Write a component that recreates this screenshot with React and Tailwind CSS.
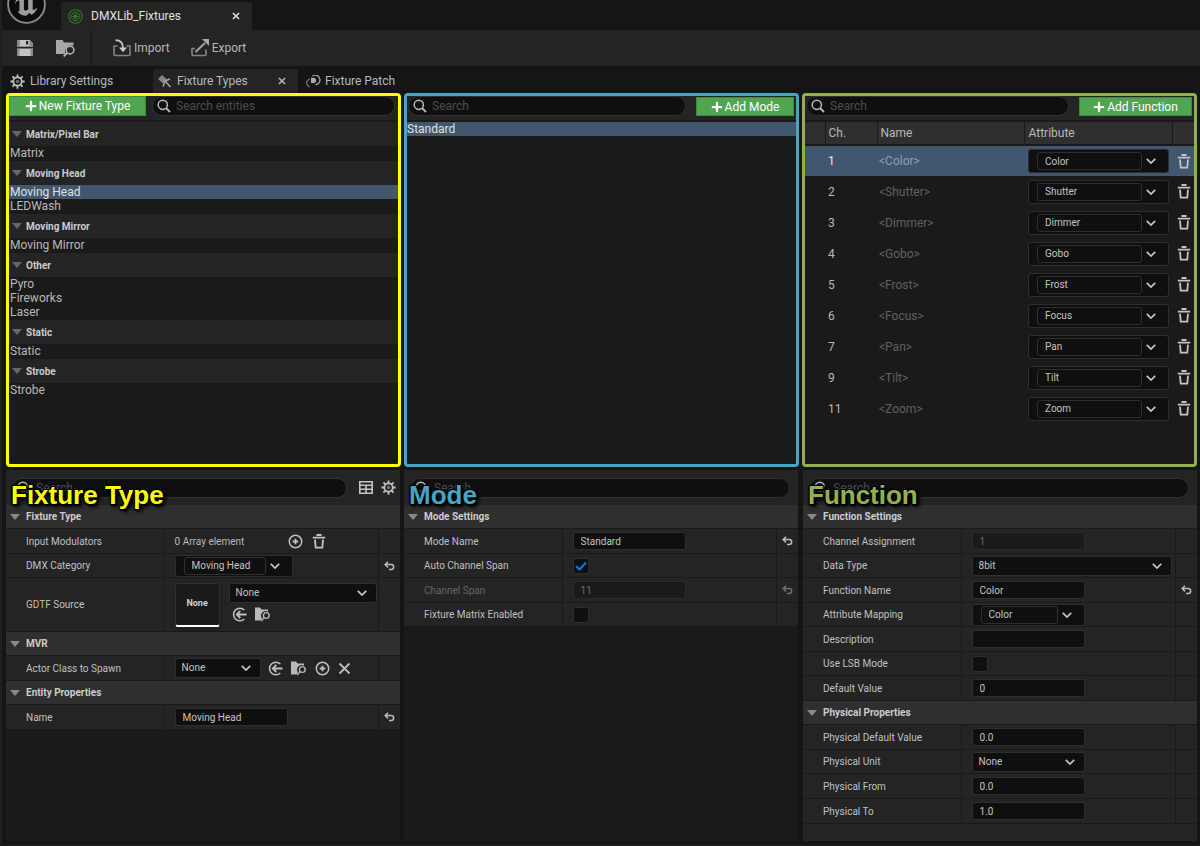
import React, { useState } from 'react';
import { SiUnrealengine } from 'react-icons/si';
import { FaPlus } from 'react-icons/fa';

/* ---------- icons ---------- */

const SearchIcon = () => (
  <svg viewBox="0 0 14 14" className="size-[14px] shrink-0" fill="none" stroke="#b8b8b8" strokeWidth="1.5">
    <circle cx="5.8" cy="5.8" r="4.6" />
    <path d="M9 9l4 4" strokeWidth="1.8" />
  </svg>
);

const ChevronIcon = () => (
  <svg viewBox="0 0 10 6" className="w-[10px] h-[6px]" fill="none" stroke="#c8c8c8" strokeWidth="1.7">
    <path d="M.8 .8L5 5 9.200 .8" />
  </svg>
);

const TrashIcon = () => (
  <svg viewBox="0 0 14 15" className="w-[14px] h-[15px]" fill="none" stroke="#c4c4c4" strokeWidth="1.8">
    <path d="M4.500 1h5M.8 3.600h12.400M3 5.600l.7 8.100h6.600l.7-8.100" />
  </svg>
);

const ResetIcon = () => (
  <svg viewBox="0 0 11 10" className="w-[11px] h-[10px]" fill="none" stroke="#bcbcbc" strokeWidth="1.500">
    <path d="M4 .8L1.200 3.600 4 6.400M1.400 3.600h5.800a2.400 2.400 0 0 1 0 4.900H5" />
  </svg>
);

const GearIcon = () => (
  <svg viewBox="0 0 16 16" className="size-[15px]" fill="none" stroke="#bdbdbd">
    <circle cx="8" cy="8" r="4.500" strokeWidth="1.900" />
    <circle cx="8" cy="8" r="1.900" fill="#bdbdbd" stroke="none" opacity=".5" />
    <path
      d="M8 .4v3.400M8 12.200v3.400M.4 8h3.400M12.200 8h3.400M2.600 2.600L5 5M11 11l2.400 2.400M2.600 13.400L5 11M11 5l2.400-2.400"
      strokeWidth="2"
    />
  </svg>
);

const SaveIcon = () => (
  <svg viewBox="0 0 16 16" className="size-4">
    <path d="M0 0h13l3 3v13H0z" fill="#8a8a8a" />
    <path d="M3 0h9.500v6H3zM2.500 9h11v7h-11z" fill="#c4c4c4" />
    <path d="M9 1h2.200v3.600H9zM0 7h16v1.200H0z" fill="#242424" />
  </svg>
);

const BrowseIcon = ({ className }) => (
  <svg viewBox="0 0 20 17" className={className} fill="none">
    <path d="M0 0h6.500l1.500 2.500h9.500v3.200a6 6 0 0 0-7.800 8.300H0z" fill="#a8a8a8" />
    <circle cx="14" cy="10" r="3.900" stroke="#b4b4b4" strokeWidth="1.600" />
    <path d="M11.300 12.800l-3.600 3.600" stroke="#b4b4b4" strokeWidth="1.900" />
  </svg>
);

const AssetBrowseIcon = () => (
  <svg viewBox="0 0 16 15" className="w-4 h-[15px]" fill="none">
    <path d="M0 .5h5l1.500 2h6.500v2.300a4.500 4.500 0 0 0-6 6.500l-1.500 2.200H0z" fill="#b8b8b8" />
    <circle cx="11.300" cy="8.500" r="2.900" stroke="#b8b8b8" strokeWidth="1.400" />
    <path d="M9.200 10.600l-3 3.400" stroke="#b8b8b8" strokeWidth="1.400" />
  </svg>
);

const ImportIcon = () => (
  <svg viewBox="0 0 18 18" className="size-[18px]" fill="none" stroke="#858585" strokeWidth="1.600">
    <path d="M4.500 7H1v8.500q0 1 1 1h14q1 0 1-1V7h-3.500" />
    <path d="M2.500 1.200c4.500 0 7.500 2.500 7.500 8" stroke="#c8c8c8" strokeWidth="1.800" />
    <path d="M6 8.500h8l-4 4.800z" fill="#c8c8c8" stroke="none" />
  </svg>
);

const ExportIcon = () => (
  <svg viewBox="0 0 18 18" className="size-[18px]" fill="none" stroke="#858585" strokeWidth="1.600">
    <path d="M4 9.500H1v6q0 1 1 1h12q1 0 1-1V10.500" />
    <path d="M4.500 13L14 4" stroke="#a8a8a8" strokeWidth="1.800" />
    <path d="M11 0h7v7z" fill="#a8a8a8" stroke="none" />
  </svg>
);

const LibraryIcon = () => (
  <svg viewBox="0 0 16 16" className="size-[15px]" fill="none" stroke="#2f7a24">
    <circle cx="8" cy="8" r="7.200" strokeWidth="1.200" />
    <circle cx="8" cy="8" r="4.600" />
    <path d="M8 4v8M4 8h8M5.200 5.200l5.600 5.600M10.800 5.200l-5.600 5.600" />
  </svg>
);

const FixtureIcon = () => (
  <svg viewBox="0 0 14 13" className="w-[14px] h-[13px]">
    <path d="M0 4L4 0l5 4.500L5 8.500z" fill="#858585" />
    <path d="M7 6l5-2M7 6.500l-2 5M7.500 6.500l5 5.500" stroke="#a8a8a8" strokeWidth="1.500" fill="none" />
  </svg>
);

const PatchIcon = () => (
  <svg viewBox="0 0 15 13" className="w-[15px] h-[13px]" fill="none" stroke="#a8a8a8" strokeWidth="1.300">
    <path d="M6.500 .9a4.800 4.800 0 1 1 3 8.800" />
    <path d="M5 2.800h2.500a2.600 2.600 0 0 1 0 5.200H5z" fill="#a8a8a8" stroke="none" />
    <path d="M3.800 3.800Q-.5 6 1 9.300l2.600 3" stroke="#6c6c6c" />
  </svg>
);

const UseSelectedIcon = () => (
  <svg viewBox="0 0 15 15" className="size-[15px]" fill="none" stroke="#c0c0c0" strokeWidth="1.600">
    <path d="M12.300 3A6.300 6.300 0 1 0 12.300 12" />
    <path d="M14.500 7.500H5M8.300 4L4.800 7.500 8.300 11" strokeWidth="1.800" />
  </svg>
);

const AddIcon = () => (
  <svg viewBox="0 0 15 15" className="size-[15px]" fill="none" stroke="#c0c0c0" strokeWidth="1.500">
    <circle cx="7.500" cy="7.500" r="6.200" />
    <path d="M7.500 4.700v5.600M4.700 7.500h5.600" strokeWidth="1.800" />
  </svg>
);

const ClearIcon = ({ className }) => (
  <svg viewBox="0 0 13 13" className={className} fill="none" stroke="currentColor">
    <path d="M1.500 1.500l10 10M11.500 1.500l-10 10" />
  </svg>
);

const TableIcon = () => (
  <svg viewBox="0 0 14 13" className="w-[14px] h-[13px]" fill="none" stroke="#c4c4c4" strokeWidth="1.600">
    <path d="M.8 .8h12.400v11.400H.8zM.8 4.200h12.400M.8 8.200h12.400M7 4.200v8" />
  </svg>
);

const Arrow = ({ className }) => (
  <svg viewBox="0 0 10 6" className={`w-[10px] h-[6px] shrink-0 ${className}`}>
    <path d="M0 0h10L5 6z" />
  </svg>
);

/* ---------- form controls ---------- */

const fieldBox = 'bg-[#0f0f0f] border border-[#2e2e2e] rounded-[3px]';

const SearchBox = ({ label, placeholder = 'Search', className = '' }) => (
  <div className={`flex items-center gap-[5px] h-5 pl-1 pr-2 rounded-full bg-[#0f0f0f] border border-[#303030] ${className}`}>
    <SearchIcon />
    <input
      type="text"
      aria-label={label}
      placeholder={placeholder}
      className="min-w-0 flex-1 h-4 bg-transparent text-[12px] leading-4 placeholder:text-[#4c4c4c] outline-none"
    />
  </div>
);

const TextField = ({ id, value, disabled }) => (
  <input
    id={id}
    type="text"
    defaultValue={value}
    disabled={disabled}
    className={
      disabled
        ? 'w-[113px] h-[18px] px-[7px] text-[10px] bg-[#1a1a1a] text-[#6a6a6a] border border-[#2b2b2b] rounded-[3px]'
        : `w-[113px] h-[18px] px-[7px] text-[10px] text-[#c4c4c4] ${fieldBox}`
    }
  />
);

const SelectField = ({ id, value, label, className }) => (
  <div className={`relative ${className}`}>
    <select id={id} aria-label={label} className={`block appearance-none w-full h-5 pl-1.5 text-[10px] leading-4 text-[#c4c4c4] ${fieldBox}`}>
      <option>{value}</option>
    </select>
    <span className="absolute right-2.5 top-[7px] pointer-events-none">
      <ChevronIcon />
    </span>
  </div>
);

const ComboField = ({ id, value, label, className }) => (
  <div className={`flex items-center pl-2 ${fieldBox} ${className}`}>
    <input
      id={id}
      type="text"
      aria-label={label}
      defaultValue={value}
      className="min-w-0 flex-1 h-[18px] px-[7px] text-[10px] text-[#c4c4c4] bg-transparent border border-[#2e2e2e] rounded-[3px]"
    />
    <button type="button" aria-label="Show options" className="w-[26px] pl-1 pr-3">
      <ChevronIcon />
    </button>
  </div>
);

const CheckField = ({ id, checked }) => {
  const [on, setOn] = useState(!!checked);

  return (
    <span className="relative flex">
      <input
        id={id}
        type="checkbox"
        checked={on}
        onChange={() => setOn(!on)}
        className={`appearance-none size-4 ${fieldBox}`}
      />
      {on && (
        <svg viewBox="0 0 12 10" className="absolute left-[2px] top-[3px] w-3 h-[10px] pointer-events-none" fill="none" stroke="#0c7be8" strokeWidth="2">
          <path d="M1 5l3.500 3.500L11 1.500" />
        </svg>
      )}
    </span>
  );
};

const GreenButton = ({ children, className }) => (
  <button type="button" className={`flex items-center justify-center gap-[2px] text-[12px] leading-4 text-white bg-[#50a551] border border-[#3f8a40] ${className}`}>
    <FaPlus className="size-3" />
    {children}
  </button>
);

const IconButton = ({ label, children }) => (
  <button type="button" aria-label={label} className="flex">
    {children}
  </button>
);

/* ---------- details panels ---------- */

const DetailsPanel = ({ title, titleColor, tools, children, className }) => (
  <section className={`relative flex flex-col ${className}`}>
    <div className="flex items-center h-[35px] pl-1.5 pr-1 bg-[#242424]">
      <SearchBox label={`Search ${title}`} className="flex-1" />
      {tools}
    </div>
    <h2
      className={`absolute left-[5px] top-[10px] text-[26px] leading-[30px] font-bold font-['Liberation_Sans',sans-serif] [text-shadow:-1px_-1px_1px_#000,1px_-1px_1px_#000,-1px_1px_1px_#000,2px_2px_2px_#000,0_2px_1px_#000,2px_0_1px_#000,3px_3px_4px_#000] ${titleColor}`}
    >
      {title}
    </h2>
    {children}
  </section>
);

const Category = ({ name, children }) => {
  const [open, setOpen] = useState(true);

  return (
    <div>
      <button
        type="button"
        aria-expanded={open}
        onClick={() => setOpen(!open)}
        className="flex items-center gap-[6px] w-full h-6 pl-1 bg-[#2f2f2f] border-b border-[#1a1a1a] text-[10px] font-bold text-[#cccccc]"
      >
        <Arrow className="fill-[#8a8a8a]" />
        {name}
      </button>
      {open && children}
    </div>
  );
};

const Row = ({ label, id, height = 'h-[25px]', reset, dim, children }) => (
  <div className={`grid grid-cols-[40%_1fr_22px] bg-[#242424] border-b border-[#1a1a1a] ${height}`}>
    <label htmlFor={id} className={`flex items-center pl-5 text-[10px] ${dim ? 'text-[#666]' : 'text-[#c0c0c0]'}`}>
      {label}
    </label>
    <div className="flex items-center min-w-0 pl-2.5 border-l border-[#1a1a1a]">{children}</div>
    <div className="flex items-center justify-center border-l border-[#1a1a1a]">
      {reset && (
        <button type="button" aria-label={`Reset ${label}`} className={dim ? 'opacity-50' : ''}>
          <ResetIcon />
        </button>
      )}
    </div>
  </div>
);

/* ---------- data ---------- */

const fixtureGroups = [
  { name: 'Matrix/Pixel Bar', items: ['Matrix'] },
  { name: 'Moving Head', items: ['Moving Head', 'LEDWash'] },
  { name: 'Moving Mirror', items: ['Moving Mirror'] },
  { name: 'Other', items: ['Pyro', 'Fireworks', 'Laser'] },
  { name: 'Static', items: ['Static'] },
  { name: 'Strobe', items: ['Strobe'] },
];

const functions = [
  { ch: 1, name: 'Color' },
  { ch: 2, name: 'Shutter' },
  { ch: 3, name: 'Dimmer' },
  { ch: 4, name: 'Gobo' },
  { ch: 5, name: 'Frost' },
  { ch: 6, name: 'Focus' },
  { ch: 7, name: 'Pan' },
  { ch: 9, name: 'Tilt' },
  { ch: 11, name: 'Zoom' },
];

/* ---------- top panels ---------- */

const FixtureTypes = () => {
  const [selected, setSelected] = useState('Moving Head');

  return (
    <section className="min-h-[374px] bg-[#1a1a1a] border-3 border-[#ffff00] rounded">
      <div className="flex items-start gap-1.5 h-[26px] pr-[3px] bg-[#242424] border-b-2 border-[#1a1a1a]">
        <GreenButton className="w-[137px] h-5">New Fixture Type</GreenButton>
        <SearchBox label="Search entities" placeholder="Search entities" className="flex-1" />
      </div>
      {fixtureGroups.map((group) => (
        <div key={group.name} className="pb-px">
          <h3 className="flex items-center gap-1 h-6 pl-[3px] bg-[#242424] text-[10px] font-bold text-[#cccccc]">
            <Arrow className="fill-[#666]" />
            {group.name}
          </h3>
          <ul>
            {group.items.map((item) => (
              <li key={item}>
                <button
                  type="button"
                  onClick={() => setSelected(item)}
                  className={`block w-full pl-px text-left text-[12px] leading-[14px] ${item === selected ? 'bg-[#40576f] text-[#e0e0e0]' : ''}`}
                >
                  {item}
                </button>
              </li>
            ))}
          </ul>
        </div>
      ))}
    </section>
  );
};

const Modes = () => (
  <section className="bg-[#1a1a1a] border-3 border-[#45a5c4] rounded">
    <div className="flex items-start gap-2.5 h-[26px] pl-px pr-0.5 bg-[#242424] border-b-2 border-[#1a1a1a]">
      <SearchBox label="Search modes" className="flex-1" />
      <GreenButton className="w-[98px] h-[19px] mt-px">Add Mode</GreenButton>
    </div>
    <ul>
      <li>
        <button type="button" className="block w-full text-left text-[12px] leading-[14px] bg-[#40576f] text-[#e0e0e0]">
          Standard
        </button>
      </li>
    </ul>
  </section>
);

const Functions = () => {
  const [selected, setSelected] = useState(1);

  return (
    <section className="bg-[#1a1a1a] border-3 border-[#92b050] rounded">
      <div className="flex items-start gap-2.5 h-[26px] pl-px pr-0.5 bg-[#242424] border-b-2 border-[#1a1a1a]">
        <SearchBox label="Search functions" className="flex-1" />
        <GreenButton className="w-[113px] h-[19px] mt-px">Add Function</GreenButton>
      </div>
      <table className="w-full table-fixed text-[12px] text-left">
        <thead>
          <tr className="h-[23px] bg-[#2f2f2f] border-b-2 border-[#1a1a1a]">
            <th className="w-5" />
            <th className="w-[52px] pl-[3px] font-normal border-l border-[#1a1a1a]">Ch.</th>
            <th className="pl-[3px] font-normal border-l border-[#1a1a1a]">Name</th>
            <th className="w-[148px] pl-1 font-normal border-l border-[#1a1a1a]">Attribute</th>
            <th className="w-[22px] border-l border-[#1a1a1a]" />
          </tr>
        </thead>
        <tbody>
          {functions.map(({ ch, name }) => (
            <tr key={ch} onClick={() => setSelected(ch)} className={`h-[31px] ${ch === selected ? 'bg-[#40576f]' : ''}`}>
              <td />
              <td className={`pl-[3px] ${ch === selected ? 'text-[#e8e8e8]' : ''}`}>{ch}</td>
              <td className={`pl-0.5 ${ch === selected ? 'text-[#8f9eac]' : 'text-[#606060]'}`}>{`<${name}>`}</td>
              <td className="pl-1 pr-[3px]">
                <ComboField value={name} label={`Attribute of channel ${ch}`} className="h-6" />
              </td>
              <td className="pl-[5px]">
                <IconButton label={`Delete ${name}`}>
                  <TrashIcon />
                </IconButton>
              </td>
            </tr>
          ))}
        </tbody>
      </table>
    </section>
  );
};

/* ---------- page ---------- */

const App = () => {
  return (
    <div className="flex flex-col min-h-screen bg-[#151515] text-[#b8b8b8] font-['Roboto',sans-serif] border-l-2 border-b border-[#202020]">
      <header className="flex items-end h-[30px]">
        <div className="flex items-center justify-center shrink-0 size-[39px] ml-[5px] mb-[6px] rounded-full bg-[#0c0c0c] border-2 border-[#6e7274]">
          <SiUnrealengine className="size-[37px] shrink-0 text-[#9a9ea0]" />
        </div>
        <div className="flex items-center w-[191px] h-7 ml-[15px] pl-[7px] pr-3 gap-2 rounded-t bg-[#242424] text-[12px] text-[#e0e0e0]">
          <LibraryIcon />
          <span className="flex-1">DMXLib_Fixtures</span>
          <IconButton label="Close DMXLib_Fixtures">
            <ClearIcon className="size-2 stroke-[2.5]" />
          </IconButton>
        </div>
      </header>

      <div className="flex items-center h-9 pl-[15px] bg-[#242424] text-[12px]">
        <IconButton label="Save">
          <SaveIcon />
        </IconButton>
        <button type="button" aria-label="Browse" className="ml-[23px]">
          <BrowseIcon className="w-5 h-[17px]" />
        </button>
        <div className="self-stretch w-0.5 ml-[14px] bg-[#1a1a1a]" />
        <button type="button" className="flex items-center gap-[3px] ml-[21px]">
          <ImportIcon />
          Import
        </button>
        <button type="button" className="flex items-center gap-[3px] ml-[21px]">
          <ExportIcon />
          Export
        </button>
      </div>

      <nav className="flex items-end h-[27px] text-[12px]">
        <button type="button" className="flex items-center gap-[5px] w-[151px] h-6 pl-2">
          <GearIcon />
          Library Settings
        </button>
        <div className="flex items-center gap-[5px] w-[145px] h-6 pl-[5px] pr-3 rounded-t bg-[#242424]">
          <FixtureIcon />
          <span className="flex-1">Fixture Types</span>
          <IconButton label="Close Fixture Types">
            <ClearIcon className="size-2 stroke-[2.5]" />
          </IconButton>
        </div>
        <button type="button" className="flex items-center gap-1 h-6 pl-2">
          <PatchIcon />
          Fixture Patch
        </button>
      </nav>

      <main className="flex-1 grid grid-cols-3 grid-rows-[auto_1fr] gap-[3px] pl-1 pr-[3px] pb-1">
        <FixtureTypes />
        <Modes />
        <Functions />

        <DetailsPanel
          title="Fixture Type"
          titleColor="text-[#ffff00]"
          className="mr-px bg-[#1a1a1a]"
          tools={
            <div className="flex items-center gap-2 pl-3">
              <IconButton label="Table view">
                <TableIcon />
              </IconButton>
              <IconButton label="View options">
                <GearIcon />
              </IconButton>
            </div>
          }
        >
          <Category name="Fixture Type">
            <Row label="Input Modulators">
              <span className="w-[113px] text-[10px]">0 Array element</span>
              <div className="flex items-center gap-[9px]">
                <IconButton label="Add element">
                  <AddIcon />
                </IconButton>
                <IconButton label="Remove all elements">
                  <TrashIcon />
                </IconButton>
              </div>
            </Row>
            <Row label="DMX Category" id="dmx-category" height="h-6" reset>
              <ComboField id="dmx-category" value="Moving Head" className="w-[118px] h-[22px]" />
            </Row>
            <Row label="GDTF Source" id="gdtf-source" height="h-[54px]">
              <div className="flex items-center justify-center w-[45px] h-11 rounded-[3px] bg-[#1a1a1a] border border-[#303030] border-b-2 border-b-white text-[9px] font-bold text-[#d0d0d0] shadow-md">
                None
              </div>
              <div className="flex flex-col gap-1 ml-[9px] pb-1">
                <SelectField id="gdtf-source" value="None" className="w-[148px]" />
                <div className="flex items-center gap-2 pl-[3px]">
                  <IconButton label="Use selected asset">
                    <UseSelectedIcon />
                  </IconButton>
                  <IconButton label="Browse to asset">
                    <AssetBrowseIcon />
                  </IconButton>
                </div>
              </div>
            </Row>
          </Category>
          <Category name="MVR">
            <Row label="Actor Class to Spawn" id="actor-class">
              <SelectField id="actor-class" value="None" className="w-[86px]" />
              <div className="flex items-center gap-2 ml-[7px]">
                <IconButton label="Use selected class">
                  <UseSelectedIcon />
                </IconButton>
                <IconButton label="Browse to class">
                  <AssetBrowseIcon />
                </IconButton>
                <IconButton label="Create class">
                  <AddIcon />
                </IconButton>
                <IconButton label="Clear class">
                  <ClearIcon className="size-[13px] stroke-2" />
                </IconButton>
              </div>
            </Row>
          </Category>
          <Category name="Entity Properties">
            <Row label="Name" id="entity-name" reset>
              <TextField id="entity-name" value="Moving Head" />
            </Row>
          </Category>
        </DetailsPanel>

        <DetailsPanel title="Mode" titleColor="text-[#45a5c4]" className="mr-px bg-[#1a1a1a]" tools={<div className="w-1" />}>
          <Category name="Mode Settings">
            <Row label="Mode Name" id="mode-name" reset>
              <TextField id="mode-name" value="Standard" />
            </Row>
            <Row label="Auto Channel Span" id="auto-span" height="h-6">
              <CheckField id="auto-span" checked />
            </Row>
            <Row label="Channel Span" id="channel-span" reset dim>
              <TextField id="channel-span" value="11" disabled />
            </Row>
            <Row label="Fixture Matrix Enabled" id="matrix-enabled" height="h-6">
              <CheckField id="matrix-enabled" />
            </Row>
          </Category>
        </DetailsPanel>

        <DetailsPanel title="Function" titleColor="text-[#92b050]" className="ml-px bg-[#242424]" tools={<div className="w-1" />}>
          <Category name="Function Settings">
            <Row label="Channel Assignment" id="channel-assignment">
              <TextField id="channel-assignment" value="1" disabled />
            </Row>
            <Row label="Data Type" id="data-type" height="h-6">
              <SelectField id="data-type" value="8bit" className="flex-1 mr-[3px]" />
            </Row>
            <Row label="Function Name" id="function-name" reset>
              <TextField id="function-name" value="Color" />
            </Row>
            <Row label="Attribute Mapping" id="attribute-mapping" height="h-6">
              <ComboField id="attribute-mapping" value="Color" className="w-[113px] h-[22px]" />
            </Row>
            <Row label="Description" id="description">
              <TextField id="description" value="" />
            </Row>
            <Row label="Use LSB Mode" id="lsb-mode" height="h-6">
              <CheckField id="lsb-mode" />
            </Row>
            <Row label="Default Value" id="default-value">
              <TextField id="default-value" value="0" />
            </Row>
          </Category>
          <Category name="Physical Properties">
            <Row label="Physical Default Value" id="physical-default">
              <TextField id="physical-default" value="0.0" />
            </Row>
            <Row label="Physical Unit" id="physical-unit" height="h-6">
              <SelectField id="physical-unit" value="None" className="w-[113px]" />
            </Row>
            <Row label="Physical From" id="physical-from">
              <TextField id="physical-from" value="0.0" />
            </Row>
            <Row label="Physical To" id="physical-to">
              <TextField id="physical-to" value="1.0" />
            </Row>
          </Category>
        </DetailsPanel>
      </main>
    </div>
  );
};

export default App;
